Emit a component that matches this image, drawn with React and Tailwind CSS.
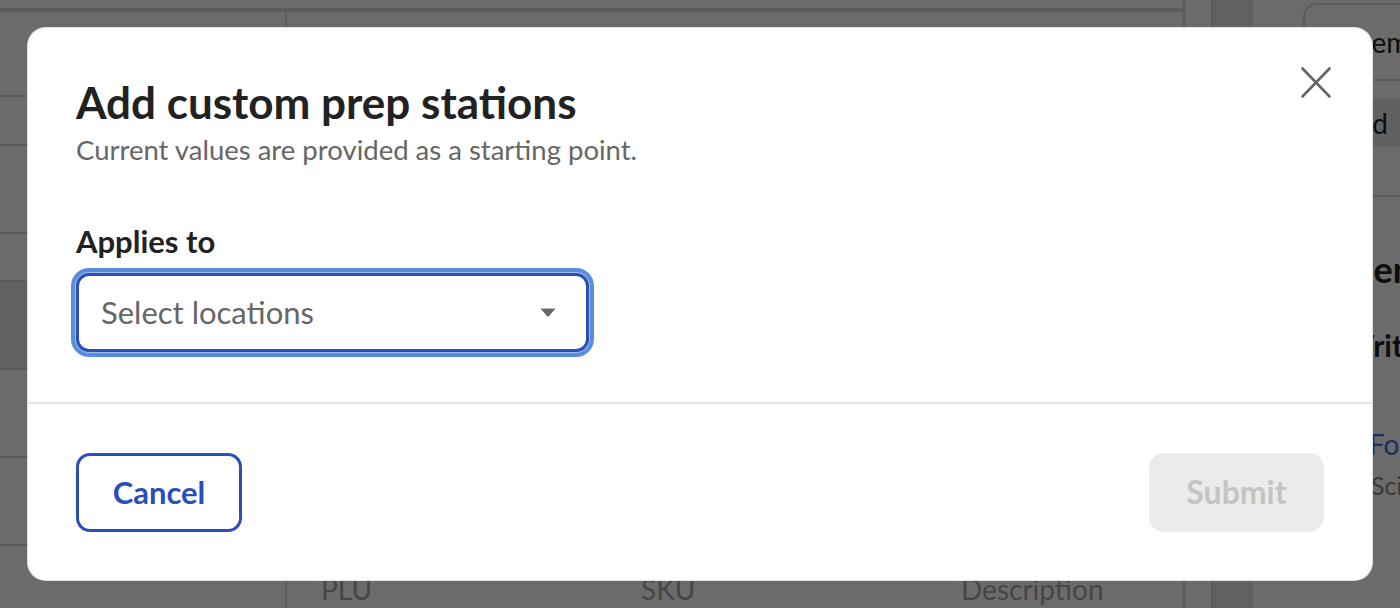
import React from "react";

function CloseIcon() {
  return (
    <svg width="30" height="31" viewBox="0 0 30 31" fill="none">
      <path d="M1.5 1.5L28.5 29.5M28.5 1.5L1.5 29.5" stroke="#666666" strokeWidth="2.6" strokeLinecap="round" />
    </svg>
  );
}

function Caret() {
  return (
    <svg width="16" height="9" viewBox="0 0 16 9" fill="none">
      <path d="M0.5 0.5H15.5L8.8 8.2C8.4 8.7 7.6 8.7 7.2 8.2L0.5 0.5Z" fill="#666666" />
    </svg>
  );
}

function BackgroundPage() {
  return (
    <div className="flex h-full w-full">
      <div className="flex w-[1183px] shrink-0 flex-col">
        <div className="h-[8px]" />
        <div className="h-[4px] bg-[#dadada]" />
        <div className="flex min-w-0 flex-1">
          <div className="flex w-[287px] shrink-0 flex-col border-r-2 border-[#dadada]">
            <div className="h-[85px] border-b-2 border-[#dadada]" />
            <div className="h-[49px] border-b-2 border-[#dadada]" />
            <div className="h-[88px] border-b-2 border-[#dadada]" />
            <div className="h-[48px] border-b-2 border-[#dadada]" />
            <div className="h-[88px] border-b-2 border-[#dadada] bg-[#e6e6e6]" />
            <div className="h-[88px] border-b-2 border-[#dadada]" />
            <div className="h-[88px] border-b-2 border-[#dadada]" />
            <div className="flex-1" />
          </div>
          <div className="flex min-w-0 flex-1 flex-col overflow-hidden">
            <div className="flex-1" />
            <div className="flex h-[36px] items-start pl-[34px] text-[28px] leading-[34px] text-[#a8a8a8]">
              <span className="w-[320px] shrink-0">PLU</span>
              <span className="w-[320px] shrink-0">SKU</span>
              <span className="w-[320px] shrink-0">Description</span>
            </div>
          </div>
        </div>
      </div>
      <div className="w-[30px] shrink-0 border-x-2 border-[#dadada]" />
      <div className="w-[40px] shrink-0 bg-[#e6e6e6]" />
      <div className="flex min-w-0 flex-1 flex-col overflow-hidden">
        <div className="flex h-[81px] border-b-2 border-[#dadada] pt-[3px]">
          <div className="ml-[50px] flex flex-1 items-center whitespace-nowrap rounded-tl-[14px] border-l-2 border-t-2 border-[#dadada] pl-[49px] text-[28px] text-[#222]">
            Items
          </div>
        </div>
        <div className="mt-[18px] flex h-[47px] items-center whitespace-nowrap bg-[#e4e4e4] pl-[85px] text-[28px] text-[#222]">
          Add
        </div>
        <div className="mt-[49px] h-[2px] bg-[#dadada]" />
        <div className="mt-[52px] whitespace-nowrap pl-[87px] text-[36px] font-bold leading-[40px] text-[#222]">
          Menu
        </div>
        <div className="mt-[38px] whitespace-nowrap pl-[90px] text-[30px] font-bold leading-[36px] text-[#222]">
          Writing
        </div>
        <div className="mt-[64px] whitespace-nowrap pl-[116px] text-[28px] leading-[34px] text-[#4a6ae0]">
          Food
        </div>
        <div className="mt-[8px] whitespace-nowrap pl-[118px] text-[25px] leading-[32px] text-[#8a8a8a]">
          Science
        </div>
      </div>
    </div>
  );
}

export default function App() {
  return (
    <div className="relative h-[608px] w-[1400px] overflow-hidden bg-white font-['Lato',sans-serif]">
      <BackgroundPage />
      <div className="absolute inset-0 bg-black/[0.58] p-[28px]">
        <div className="relative flex h-full flex-col rounded-[18px] bg-white shadow-[0_0_0_1px_#e2e2e2]">
          <button className="absolute right-[41px] top-[39px] flex h-[31px] w-[30px] items-center justify-center">
            <CloseIcon />
          </button>
          <div className="px-[48px] pb-[50px] pt-[48px]">
            <h2 className="text-[44px] font-bold leading-[52px] text-[#222]">Add custom prep stations</h2>
            <p className="mt-[5px] text-[27.5px] leading-[34px] text-[#666]">
              Current values are provided as a starting point.
            </p>
            <label className="mt-[55px] block text-[31px] font-bold leading-[38px] text-[#222]">Applies to</label>
            <div className="mt-[13px] flex h-[79px] w-[513px] items-center justify-between rounded-[13px] border-[3px] border-[#2b4fb8] bg-white pl-[22px] pr-[30px] shadow-[0_0_0_1px_#9fbbea,0_0_0_5px_#5a8ddc]">
              <span className="text-[31px] text-[#666]">Select locations</span>
              <Caret />
            </div>
          </div>
          <div className="h-[2px] bg-[#e3e3e3]" />
          <div className="flex flex-1 items-center justify-between px-[48px]">
            <button className="flex h-[79px] w-[166px] items-center justify-center rounded-[14px] border-[3px] border-[#2b4fb8] text-[31px] font-bold text-[#2b4fb8]">
              Cancel
            </button>
            <button className="flex h-[79px] w-[175px] items-center justify-center rounded-[15px] bg-[#ebebeb] text-[32px] font-bold text-[#c4c4c4]">
              Submit
            </button>
          </div>
        </div>
      </div>
    </div>
  );
}
